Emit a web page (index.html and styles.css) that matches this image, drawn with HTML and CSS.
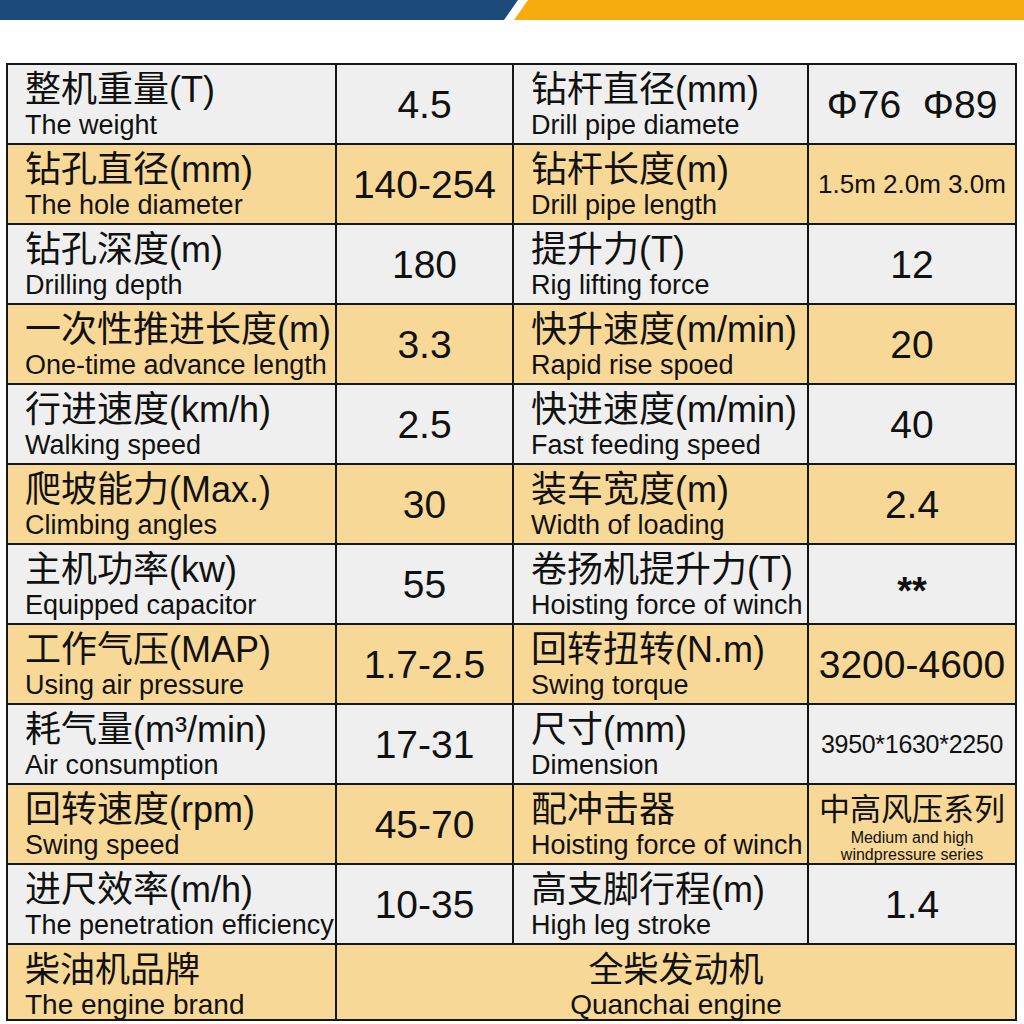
FILE: index.html
```html
<!DOCTYPE html>
<html lang="zh-CN">
<head>
<meta charset="utf-8">
<title>参数表</title>
<link rel="stylesheet" href="styles.css">
</head>
<body>
<div class="banner">
  <svg width="1024" height="20" viewBox="0 0 1024 20" aria-hidden="true">
    <polygon points="0,0 518,0 504,20 0,20" fill="#1c4a7a"/>
    <polygon points="528,0 1024,0 1024,20 514,20" fill="#f6ab0e"/>
  </svg>
</div>

<div class="spec">
  <div class="row g">
    <div class="cell label"><div class="zh">整机重量(T)</div><div class="en">The weight</div></div>
    <div class="cell val">4.5</div>
    <div class="cell label"><div class="zh">钻杆直径(mm)</div><div class="en">Drill pipe diamete</div></div>
    <div class="cell val">Φ76&nbsp;&nbsp;Φ89</div>
  </div>
  <div class="row y">
    <div class="cell label"><div class="zh">钻孔直径(mm)</div><div class="en">The hole diameter</div></div>
    <div class="cell val">140-254</div>
    <div class="cell label"><div class="zh">钻杆长度(m)</div><div class="en">Drill pipe length</div></div>
    <div class="cell val small">1.5m 2.0m 3.0m</div>
  </div>
  <div class="row g">
    <div class="cell label"><div class="zh">钻孔深度(m)</div><div class="en">Drilling depth</div></div>
    <div class="cell val">180</div>
    <div class="cell label"><div class="zh">提升力(T)</div><div class="en">Rig lifting force</div></div>
    <div class="cell val">12</div>
  </div>
  <div class="row y">
    <div class="cell label"><div class="zh">一次性推进长度(m)</div><div class="en">One-time advance length</div></div>
    <div class="cell val">3.3</div>
    <div class="cell label"><div class="zh">快升速度(m/min)</div><div class="en">Rapid rise spoed</div></div>
    <div class="cell val">20</div>
  </div>
  <div class="row g">
    <div class="cell label"><div class="zh">行进速度(km/h)</div><div class="en">Walking speed</div></div>
    <div class="cell val">2.5</div>
    <div class="cell label"><div class="zh">快进速度(m/min)</div><div class="en">Fast feeding speed</div></div>
    <div class="cell val">40</div>
  </div>
  <div class="row y">
    <div class="cell label"><div class="zh">爬坡能力(Max.)</div><div class="en">Climbing angles</div></div>
    <div class="cell val">30</div>
    <div class="cell label"><div class="zh">装车宽度(m)</div><div class="en">Width of loading</div></div>
    <div class="cell val">2.4</div>
  </div>
  <div class="row g">
    <div class="cell label"><div class="zh">主机功率(kw)</div><div class="en">Equipped capacitor</div></div>
    <div class="cell val">55</div>
    <div class="cell label"><div class="zh">卷扬机提升力(T)</div><div class="en">Hoisting force of winch</div></div>
    <div class="cell val stars">**</div>
  </div>
  <div class="row y">
    <div class="cell label"><div class="zh">工作气压(MAP)</div><div class="en">Using air pressure</div></div>
    <div class="cell val">1.7-2.5</div>
    <div class="cell label"><div class="zh">回转扭转(N.m)</div><div class="en">Swing torque</div></div>
    <div class="cell val">3200-4600</div>
  </div>
  <div class="row g">
    <div class="cell label"><div class="zh">耗气量(m³/min)</div><div class="en">Air consumption</div></div>
    <div class="cell val">17-31</div>
    <div class="cell label"><div class="zh">尺寸(mm)</div><div class="en">Dimension</div></div>
    <div class="cell val tiny">3950*1630*2250</div>
  </div>
  <div class="row y">
    <div class="cell label"><div class="zh">回转速度(rpm)</div><div class="en">Swing speed</div></div>
    <div class="cell val">45-70</div>
    <div class="cell label"><div class="zh">配冲击器</div><div class="en">Hoisting force of winch</div></div>
    <div class="cell val series"><div class="series-zh">中高风压系列</div><div class="series-en">Medium and high</div><div class="series-en">windpressure series</div></div>
  </div>
  <div class="row g">
    <div class="cell label"><div class="zh">进尺效率(m/h)</div><div class="en">The penetration efficiency</div></div>
    <div class="cell val">10-35</div>
    <div class="cell label"><div class="zh">高支脚行程(m)</div><div class="en">High leg stroke</div></div>
    <div class="cell val">1.4</div>
  </div>
  <div class="row y">
    <div class="cell label narrow"><div class="zh">柴油机品牌</div><div class="en">The engine brand</div></div>
    <div class="cell wide narrow"><div class="zh">全柴发动机</div><div class="en">Quanchai engine</div></div>
  </div>
</div>
</body>
</html>
```

FILE: styles.css
```css
html, body {
  margin: 0;
  padding: 0;
  background: #ffffff;
}

body {
  width: 1024px;
  height: 1024px;
  overflow: hidden;
  font-family: "Liberation Sans", "Noto Sans CJK SC", sans-serif;
  color: #111111;
}

.banner {
  height: 20px;
  line-height: 0;
}

.banner svg {
  display: block;
}

.spec {
  margin: 43px 0 0 6px;
  width: 1011px;
  box-sizing: border-box;
  padding: 2px;
  background: #161616;
  display: grid;
  grid-template-columns: 327px 175px 293px 206px;
  grid-template-rows: repeat(11, 78px) 74px;
  gap: 2px;
}

.row {
  display: contents;
}

.row.g > .cell {
  background: #efefef;
}

.row.y > .cell {
  background: #f8d896;
}

.cell {
  box-sizing: border-box;
  min-width: 0;
  overflow: hidden;
}

.label {
  padding: 4px 0 0 17px;
  white-space: nowrap;
}

.label .zh {
  font-size: 36px;
  line-height: 42px;
  height: 42px;
}

.label .en {
  font-size: 27px;
  line-height: 28px;
}

.val {
  display: flex;
  align-items: center;
  justify-content: center;
  font-size: 39px;
  padding-top: 1px;
  white-space: nowrap;
}

.val.small {
  font-size: 26px;
}

.val.tiny {
  font-size: 25px;
  letter-spacing: -0.3px;
}

.val.stars {
  font-size: 38px;
  font-weight: bold;
  padding-top: 14px;
}

.val.series {
  flex-direction: column;
  justify-content: flex-start;
  padding-top: 0;
}

.series-zh {
  font-size: 31px;
  line-height: 44px;
  height: 44px;
  font-family: "Noto Sans CJK SC", sans-serif;
}

.series-en {
  font-size: 16px;
  line-height: 17px;
  text-align: center;
}

.wide {
  grid-column: span 3;
  text-align: center;
  padding-top: 4px;
}

.narrow .zh {
  font-size: 35px;
  line-height: 42px;
  height: 42px;
}

.narrow .en {
  font-size: 28px;
  line-height: 28px;
}
```
